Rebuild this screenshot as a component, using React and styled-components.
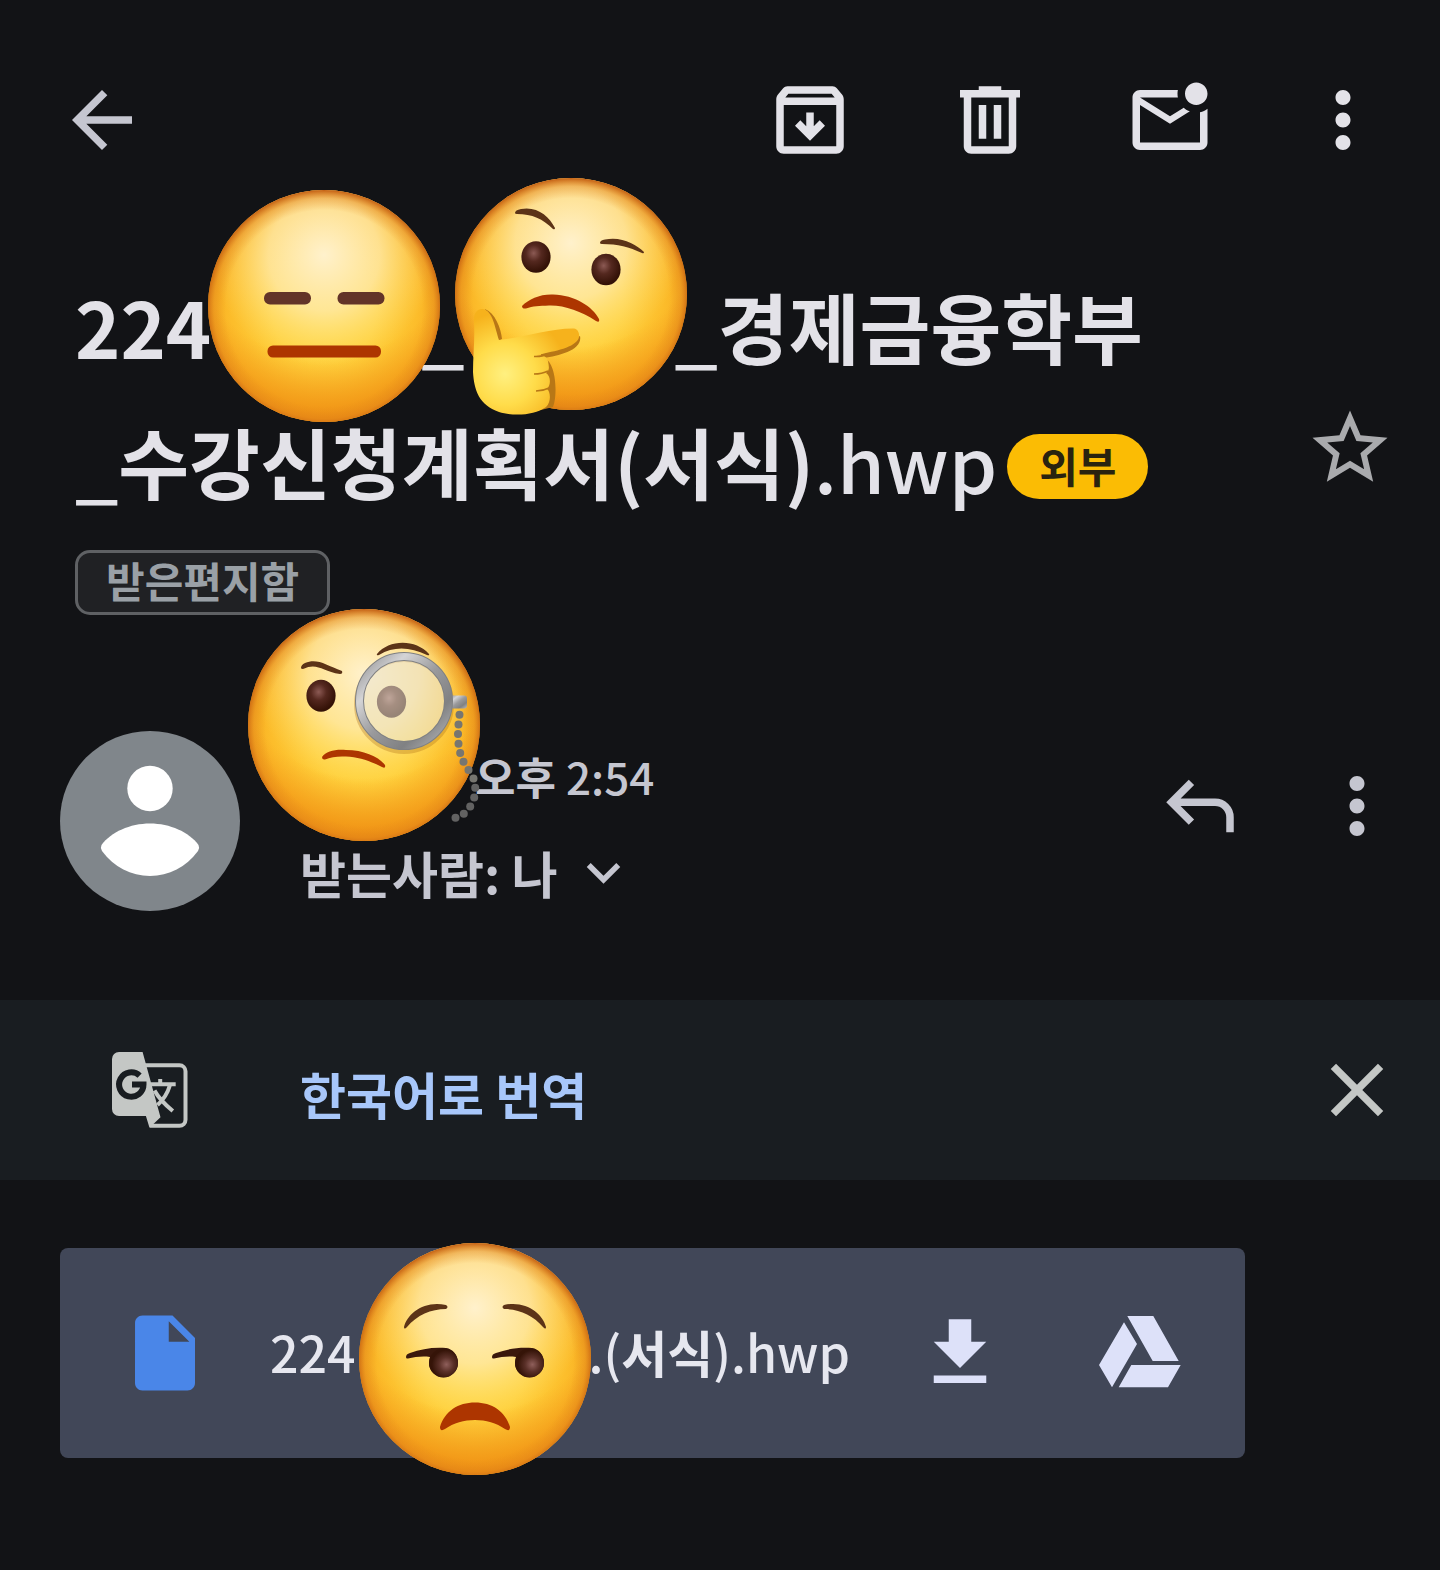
import React from "react";
import styled, { createGlobalStyle } from "styled-components";

const GlobalStyle = createGlobalStyle`
  *, *::before, *::after { box-sizing: border-box; }
  body {
    margin: 0;
    background: #121316;
    color: #e3e2e8;
    font-family: "Noto Sans CJK KR", "Noto Sans", sans-serif;
  }
`;

const Page = styled.main`
  min-height: 100vh;
  overflow: hidden;
`;

const Toolbar = styled.header`
  display: flex;
  justify-content: space-between;
  align-items: center;
  padding: 75px 60px 0 57px;
`;

const Actions = styled.div`
  display: flex;
  align-items: center;
  gap: ${(p) => p.$gap}px;
  height: ${(p) => (p.$height ? `${p.$height}px` : "auto")};
`;

const IconButton = styled.button`
  display: flex;
  align-items: center;
  justify-content: center;
  flex: none;
  width: ${(p) => (p.$narrow ? 75 : 90)}px;
  height: 90px;
  padding: 0;
  border: 0;
  background: none;
  color: ${(p) => p.$color || "#e3e2e8"};
  cursor: pointer;
`;

const Glyph = styled.svg`
  display: block;
  flex: none;
  width: ${(p) => p.$size || 90}px;
  height: ${(p) => p.$size || 90}px;
  fill: currentColor;
`;

const Latin = styled.span`
  font-weight: 500;
`;

const Subject = styled.section`
  display: flex;
  justify-content: space-between;
  align-items: flex-start;
  padding: 93px 45px 0 75px;
`;

const Title = styled.h1`
  margin: 0 0 22px;
  font-size: 77px;
  line-height: 135px;
  font-weight: 700;
`;

const TitleLine = styled.span`
  display: block;
  white-space: nowrap;
`;

const Covered = styled.span`
  display: inline-block;
  position: relative;
  flex: none;
  width: ${(p) => p.$width}px;
  height: 1px;
`;

const Sticker = styled.svg`
  position: absolute;
  z-index: 1;
  left: ${(p) => p.$left}px;
  top: ${(p) => p.$top}px;
  width: 256px;
  height: 256px;
`;

const Badge = styled.span`
  display: inline-block;
  margin-left: 10px;
  padding: 0 32px 4px;
  border-radius: 33px;
  background: #fbbc04;
  color: #29230f;
  font-size: 42px;
  line-height: 61px;
  vertical-align: 11px;
`;

const FolderChip = styled.button`
  display: block;
  height: 65px;
  padding: 0 28px 6px;
  border: 3px solid #5f6164;
  border-radius: 15px;
  background: #202124;
  color: #9aa0a6;
  font: inherit;
  font-size: 42px;
  line-height: 53px;
  font-weight: 700;
`;

const StarSlot = styled.div`
  padding-top: 145px;
`;

const Sender = styled.section`
  display: flex;
  align-items: flex-start;
  gap: 60px;
  padding: 116px 38px 77px 60px;
  color: #c5c6d0;
`;

const SenderText = styled.div`
  flex: 1;
`;

const SenderLine = styled.div`
  display: flex;
  align-items: center;
  height: 96px;
  padding-bottom: 6px;
  white-space: nowrap;
`;

const Time = styled.time`
  font-size: 44px;
  font-weight: 700;
`;

const Recipients = styled.button`
  display: flex;
  align-items: center;
  gap: 12px;
  padding: 0;
  border: 0;
  background: none;
  color: inherit;
  font: inherit;
  font-size: 50px;
  line-height: 72px;
  font-weight: 700;
`;

const TranslateBar = styled.section`
  display: flex;
  align-items: center;
  height: 180px;
  padding: 0 38px 0 112px;
  background: #191d21;
  color: #c4c7c5;
`;

const TranslateLink = styled.a`
  flex: 1;
  padding: 6px 0 0 112px;
  color: #a8c7fa;
  font-size: 50px;
  line-height: 72px;
  font-weight: 700;
  text-decoration: none;
`;

const Attachment = styled.section`
  display: flex;
  align-items: center;
  gap: 60px;
  height: 210px;
  margin: 68px 195px 0 60px;
  padding: 0 60px;
  border-radius: 8px;
  background: #414758;
`;

const FileIcon = styled.span`
  color: #4a86e8;
`;

const FileName = styled.span`
  flex: 1;
  padding-bottom: 4px;
  color: #e6e7ef;
  font-size: 50px;
  line-height: 72px;
  font-weight: 700;
  white-space: nowrap;
`;

const icons = {
  back: "M20 11H7.83l5.59-5.59L12 4l-8 8 8 8 1.41-1.41L7.83 13H20v-2z",
  archive:
    "M20.54 5.23l-1.39-1.68C18.88 3.21 18.47 3 18 3H6c-.47 0-.88.21-1.16.55L3.46 5.23C3.17 5.57 3 6.02 3 6.5V19c0 1.1.9 2 2 2h14c1.1 0 2-.9 2-2V6.5c0-.48-.17-.93-.46-1.27zM6.24 5h11.52l.83 1H5.42l.82-1zM5 19V8h14v11H5zm11-5.5l-4 4-4-4 1.41-1.41L11 13.67V10h2v3.67l1.59-1.58L16 13.5z",
  trash:
    "M15 4V3H9v1H4v2h1v13c0 1.1.9 2 2 2h10c1.1 0 2-.9 2-2V6h1V4h-5zm2 15H7V6h10v13zM9 8h2v9H9zm4 0h2v9h-2z",
  unread:
    "M22 8.98V18c0 1.1-.9 2-2 2H4c-1.1 0-2-.9-2-2V6c0-1.1.9-2 2-2h10.1c-.06.32-.1.66-.1 1s.04.68.1 1H4l8 5 3.67-2.29c.47.43 1.02.76 1.63.98L12 13 4 8v10h16V9.9c.74-.15 1.42-.48 2-.92zM16 5c0 1.66 1.34 3 3 3s3-1.34 3-3-1.34-3-3-3-3 1.34-3 3z",
  more: "M12 8c1.1 0 2-.9 2-2s-.9-2-2-2-2 .9-2 2 .9 2 2 2zm0 2c-1.1 0-2 .9-2 2s.9 2 2 2 2-.9 2-2-.9-2-2-2zm0 6c-1.1 0-2 .9-2 2s.9 2 2 2 2-.9 2-2-.9-2-2-2z",
  star: "M22 9.24l-7.19-.62L12 2 9.19 8.63 2 9.24l5.46 4.73L5.82 21 12 17.27 18.18 21l-1.63-7.03L22 9.24zM12 15.4l-3.76 2.27 1-4.28-3.32-2.88 4.38-.38L12 6.1l1.71 4.04 4.38.38-3.32 2.88 1 4.28L12 15.4z",
  reply:
    "M19 19v-4q0-1.25-.875-2.125T16 12H6.825l3.6 3.6L9 17l-6-6 6-6 1.425 1.4-3.6 3.6H16q2.075 0 3.538 1.463T21 15v4h-2z",
  expand: "M16.59 8.59L12 13.17 7.41 8.59 6 10l6 6 6-6z",
  close:
    "M19 6.41L17.59 5 12 10.59 6.41 5 5 6.41 10.59 12 5 17.59 6.41 19 12 13.41 17.59 19 19 17.59 13.41 12z",
  file: "M6 2c-1.1 0-1.99.9-1.99 2L4 20c0 1.1.89 2 1.99 2H18c1.1 0 2-.9 2-2V8l-6-6H6zm7 7V3.5L18.5 9H13z",
  download: "M19 9h-4V3H9v6H5l7 7 7-7zM5 18v2h14v-2H5z",
};

function Icon({ name, size }) {
  return (
    <Glyph viewBox="0 0 24 24" $size={size} aria-hidden="true">
      <path d={icons[name]} />
    </Glyph>
  );
}

function DriveIcon() {
  return (
    <Glyph viewBox="-4 -8 90 90" aria-hidden="true">
      <path d="M28.3 0H54.3L79.7 45H53.7zM25 6.3L38 28 13 71.3 0 49zM32.3 49H81.7L69 71.3H19.7z" />
    </Glyph>
  );
}

function TranslateIcon() {
  return (
    <Glyph viewBox="0 0 76 76" $size={76} aria-hidden="true">
      <path d="M7 0H30.6L48.5 65.3 37.5 75.7 33.9 64H7a7 7 0 0 1-7-7V7a7 7 0 0 1 7-7z" />
      <path
        d="M32 13.3H67.5a6 6 0 0 1 6 6V67.8a6 6 0 0 1-6 6H38"
        fill="none"
        stroke="currentColor"
        strokeWidth="4"
      />
      <path
        d="M27.6 23.6A12.2 12.2 0 1 0 31.5 32.4H20"
        fill="none"
        stroke="#191d21"
        strokeWidth="6"
      />
      <path
        d="M48.2 27V32M38.8 32.3H63.7M58 33Q54.5 45 45.5 53M42.5 38.5Q48 48.5 60.8 59"
        fill="none"
        stroke="currentColor"
        strokeWidth="4"
      />
    </Glyph>
  );
}

function Avatar() {
  return (
    <Glyph viewBox="0 0 180 180" $size={180} aria-hidden="true">
      <circle cx="90" cy="90" r="90" fill="#80868b" />
      <circle cx="90" cy="57.5" r="22.7" fill="#fff" />
      <path
        d="M41.5 114C51 101 70 92.5 90 92.5S129 101 138.500 114Q140 117 138 120C126 136 109 145 90 145S54 136 42 120Q40 117 41.500 114z"
        fill="#fff"
      />
    </Glyph>
  );
}

function StickerDefs() {
  return (
    <defs>
      <radialGradient id="skin" cx="50%" cy="52%" r="50%">
        <stop offset="0" stopColor="#ffdc48" />
        <stop offset=".45" stopColor="#ffd23e" />
        <stop offset=".8" stopColor="#fcbd2b" />
        <stop offset="1" stopColor="#f7aa20" />
      </radialGradient>
      <radialGradient id="glow" cx="50%" cy="28%" r="48%">
        <stop offset="0" stopColor="#fff1cc" />
        <stop offset=".5" stopColor="#ffe9a8" stopOpacity=".8" />
        <stop offset="1" stopColor="#ffdf70" stopOpacity="0" />
      </radialGradient>
      <radialGradient id="chin" cx="50%" cy="14%" r="84%">
        <stop offset=".7" stopColor="#f39a18" stopOpacity="0" />
        <stop offset=".97" stopColor="#f19516" stopOpacity=".95" />
        <stop offset="1" stopColor="#ee9014" />
      </radialGradient>
      <radialGradient id="rim" cx="50%" cy="51%" r="51%">
        <stop offset=".83" stopColor="#e0861a" stopOpacity="0" />
        <stop offset=".93" stopColor="#de801a" stopOpacity=".4" />
        <stop offset="1" stopColor="#c05a10" stopOpacity=".95" />
      </radialGradient>
      <radialGradient id="eye" cx="42%" cy="38%" r="58%">
        <stop offset="0" stopColor="#8c5a54" />
        <stop offset=".45" stopColor="#54281f" />
        <stop offset="1" stopColor="#341207" />
      </radialGradient>
      <radialGradient id="sideEye" cx="60%" cy="56%" r="50%">
        <stop offset="0" stopColor="#8f5f5b" />
        <stop offset=".5" stopColor="#5a3028" />
        <stop offset="1" stopColor="#351408" />
      </radialGradient>
      <radialGradient id="hand" gradientUnits="userSpaceOnUse" cx="-66" cy="80" r="62">
        <stop offset="0" stopColor="#fff080" />
        <stop offset=".5" stopColor="#ffdc4a" />
        <stop offset="1" stopColor="#f6b21c" />
      </radialGradient>
      <linearGradient id="metal" x1="0" y1="0" x2="1" y2="1">
        <stop offset="0" stopColor="#8d8d8f" />
        <stop offset=".25" stopColor="#d4d4d6" />
        <stop offset=".5" stopColor="#9a9a9c" />
        <stop offset=".75" stopColor="#808183" />
        <stop offset="1" stopColor="#b8b8ba" />
      </linearGradient>
    </defs>
  );
}

function Face({ left, top, label, children }) {
  return (
    <Sticker viewBox="-128 -128 256 256" $left={left} $top={top} role="img" aria-label={label}>
      <StickerDefs />
      {["skin", "glow", "chin", "rim"].map((layer) => (
        <circle key={layer} r="116" fill={`url(#${layer})`} />
      ))}
      {children}
    </Sticker>
  );
}

const brow = "#5c3317";
const lip = "#ad3500";

function Expressionless(props) {
  return (
    <Face {...props}>
      <rect x="-60" y="-14" width="47" height="12.500" rx="6" fill="#633428" />
      <rect x="13.500" y="-14" width="47" height="12.500" rx="6" fill="#633428" />
      <rect x="-56.500" y="39.500" width="113.500" height="12" rx="5.500" fill={lip} />
    </Face>
  );
}

function Thinking(props) {
  return (
    <Face {...props}>
      <path d="M-56-81Q-56-84-50-85C-34-88-22-78-16-66Q-16-64-18-65C-28-75-39-80-54-80Q-56-80-56-81z" fill={brow} />
      <path d="M29-51Q29-54 34-54.500C50-58 65-50 73-42Q73-40 71-41C58-47 47-50 31-50Q29-50 29-51z" fill={brow} />
      <ellipse cx="-35" cy="-37" rx="14.600" ry="15.800" fill="url(#eye)" />
      <ellipse cx="35" cy="-24.500" rx="14.600" ry="15.800" fill="url(#eye)" />
      <path d="M-49 12C-42 5-31 0-18 .5C4 1 22 13 28 25Q29 29 25 27C10 17-7 11-22 11.500C-32 12-38 12-45 14.500Q-49 15-49 12z" fill={lip} />
      <path d="M-86 15C-76 19-70 34-69 45L-76 49zM9 42C12 56-12 62-27 64C-15 68-13 100-18 113L-30 116-30 60z" fill="#b87716" />
      <path
        d="M-97 28C-98 20-94 14-88 15C-78 17-76 34-72 46C-50 44-20 34 3 34.500C8 35 10 43 6 47C-2 56-24 58-37 62C-30 60-24 62-23 67C-22 73-21 76-25 79C-20 82-20 91-24 95C-20 98-20 109-25 113C-37 122-59 122-72 118C-92 111-97 96-98 78C-98 62-96 45-97 28z"
        fill="url(#hand)"
      />
      <path d="M-37 62.500Q-29 63-24 60M-37 80Q-29 80-23 77M-35 97Q-28 97-22 94" fill="none" stroke="#b87716" strokeWidth="1.500" />
    </Face>
  );
}

const chain = [
  [95.5, -10.2], [94.5, -0.5], [94, 9], [94.5, 18.8], [96.2, 28], [99.5, 36.8], [104.5, 45],
  [109.5, 53.500], [111.2, 62.800], [110.2, 72.500], [106.2, 81.500], [99.800, 88.800], [91.500, 92.800],
];

function Monocle(props) {
  return (
    <Face {...props}>
      <path d="M-63-57Q-63-60-59-62C-47-67-38-60-22-54Q-21-51-24-51C-42-54-47-63-61-56Q-63-56-63-57z" fill={brow} />
      <path d="M13-71C25-86 52-86 65-71Q66-69 63-70C46-78 30-79 15-70Q12-69 13-71z" fill={brow} />
      <ellipse cx="-43" cy="-29.200" rx="14.600" ry="16" fill="url(#eye)" />
      <ellipse cx="27.500" cy="-23.200" rx="14.600" ry="16" fill="url(#eye)" />
      <path d="M-42 32C-38 26-28 24-18 25C0 25 15 32 21 40Q22 44 18 42C6 36-5 32-18 31.500C-26 31-33 32-39 34.500Q-42 35-42 32z" fill={lip} />
      <circle cx="40" cy="-21" r="46" fill="none" stroke="#a5640c" strokeWidth="8" opacity=".3" />
      <circle cx="40" cy="-24" r="42" fill="#e9e4d4" opacity=".55" />
      <rect x="86" y="-29.500" width="17" height="13" rx="3" fill="url(#metal)" />
      <circle cx="40" cy="-24" r="44.500" fill="none" stroke="#7f8082" strokeWidth="9" />
      <circle cx="40" cy="-24" r="44.500" fill="none" stroke="url(#metal)" strokeWidth="7" />
      {chain.map(([x, y], i) => (
        <circle key={i} cx={x} cy={y} r="4" fill={i < 8 ? "#777670" : "#626262"} />
      ))}
    </Face>
  );
}

function Unamused(props) {
  const lidAndPupil =
    "M-69-2Q-69-5-65-6C-54-10-42-12-29-11C-22-10-17-4-17 4A14.500 14.500 0 0 1-46 4L-45-2C-53-3-60-2-67-.5Q-69 0-69-2z";
  return (
    <Face {...props}>
      <path d="M-71-32C-68-45-51-59-29-54Q-26-52-29-50C-44-50-58-44-68-32Q-71-29-71-32z" fill={brow} />
      <path d="M71-32C68-45 51-59 29-54Q26-52 29-50C44-50 58-44 68-32Q71-29 71-32z" fill={brow} />
      {[0, 86].map((shift) => (
        <g key={shift} transform={`translate(${shift} 0)`}>
          <path d={lidAndPupil} fill="#3a180c" />
          <circle cx="-31.500" cy="3.800" r="14.500" fill="url(#sideEye)" />
        </g>
      ))}
      <path d="M-35 68C-30 52-17 43.500 0 43.500S30 52 35 68Q35 73 30 70C13 58-13 58-30 70Q-35 73-35 68z" fill={lip} />
    </Face>
  );
}

export default function App() {
  return (
    <>
      <GlobalStyle />
      <Page>
        <Toolbar>
          <IconButton aria-label="뒤로" $color="#c5c6d0">
            <Icon name="back" />
          </IconButton>
          <Actions $gap={90}>
            <IconButton aria-label="보관처리">
              <Icon name="archive" />
            </IconButton>
            <IconButton aria-label="삭제">
              <Icon name="trash" />
            </IconButton>
            <IconButton aria-label="읽지않음으로 표시">
              <Icon name="unread" />
            </IconButton>
            <IconButton aria-label="옵션 더보기" $narrow>
              <Icon name="more" />
            </IconButton>
          </Actions>
        </Toolbar>

        <Subject>
          <div>
            <Title>
              <TitleLine>
                224
                <Covered $width={210}>
                  <Expressionless left={-15} top={-180} label="무표정한 얼굴" />
                </Covered>
                <Latin>_</Latin>
                <Covered $width={210}>
                  <Thinking left={-22} top={-192} label="생각하는 얼굴" />
                </Covered>
                <Latin>_</Latin>경제금융학부
              </TitleLine>
              <TitleLine>
                <Latin>_</Latin>수강신청계획서(서식)<Latin>.hwp</Latin>
                <Badge>외부</Badge>
              </TitleLine>
            </Title>
            <FolderChip>받은편지함</FolderChip>
          </div>
          <StarSlot>
            <IconButton aria-label="별표" $color="#a9aaad">
              <Icon name="star" />
            </IconButton>
          </StarSlot>
        </Subject>

        <Sender>
          <Avatar />
          <SenderText>
            <SenderLine>
              <Covered $width={175}>
                <Monocle left={-64} top={-179} label="단안경을 쓴 얼굴" />
              </Covered>
              <Time dateTime="14:54">
                오후 <Latin>2:54</Latin>
              </Time>
            </SenderLine>
            <SenderLine>
              <Recipients>
                받는사람: 나
                <Icon name="expand" size={67} />
              </Recipients>
            </SenderLine>
          </SenderText>
          <Actions $gap={67} $height={150}>
            <IconButton aria-label="답장" $color="#c5c6d0">
              <Icon name="reply" />
            </IconButton>
            <IconButton aria-label="메일 옵션" $color="#c5c6d0">
              <Icon name="more" />
            </IconButton>
          </Actions>
        </Sender>

        <TranslateBar>
          <TranslateIcon />
          <TranslateLink href="#translate">한국어로 번역</TranslateLink>
          <IconButton aria-label="닫기" $color="#c4c7c5">
            <Icon name="close" />
          </IconButton>
        </TranslateBar>

        <Attachment>
          <FileIcon>
            <Icon name="file" />
          </FileIcon>
          <FileName>
            <Latin>224</Latin>
            <Covered $width={233}>
              <Unamused left={-9} top={-141} label="못마땅한 얼굴" />
            </Covered>
            <Latin>.(</Latin>서식<Latin>).hwp</Latin>
          </FileName>
          <Actions $gap={90}>
            <IconButton aria-label="다운로드" $color="#dde1f9">
              <Icon name="download" />
            </IconButton>
            <IconButton aria-label="드라이브에 저장" $color="#dde1f9">
              <DriveIcon />
            </IconButton>
          </Actions>
        </Attachment>
      </Page>
    </>
  );
}
